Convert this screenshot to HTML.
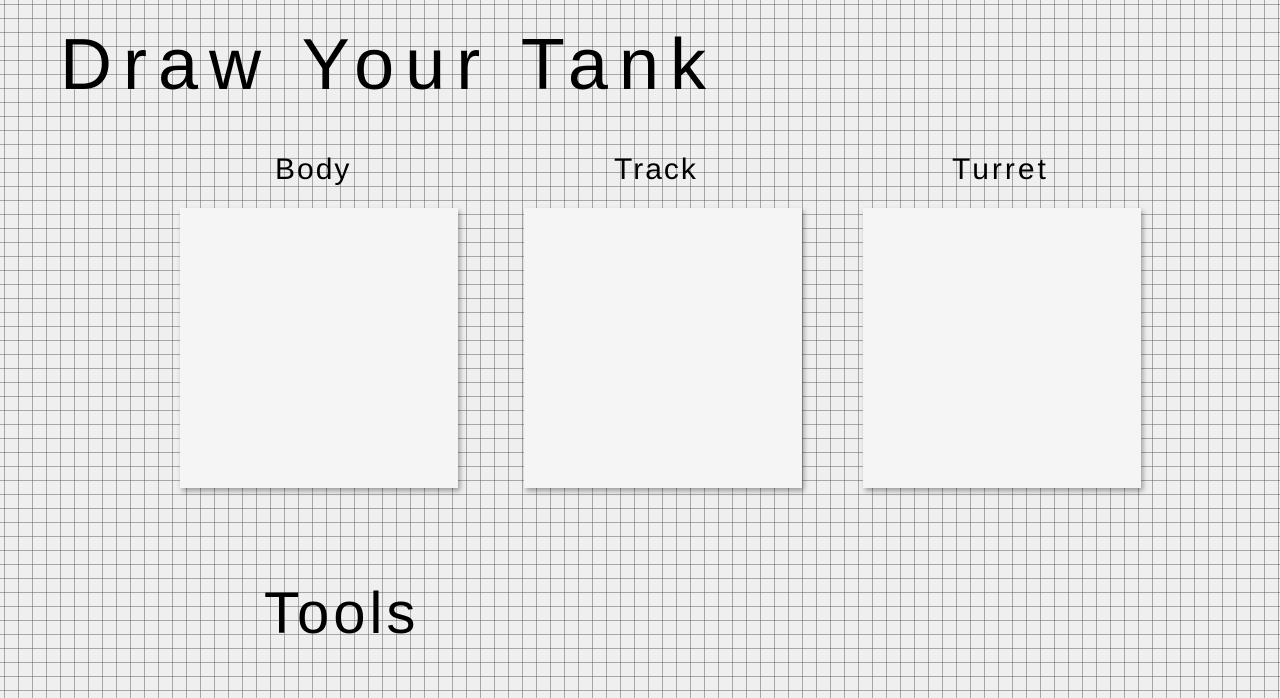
<!DOCTYPE html>
<html><head><style>
html,body{margin:0;width:1280px;height:698px;overflow:hidden}
body{background-color:#efefef;
background-image:linear-gradient(90deg,rgba(80,80,80,.45) 1px,transparent 1px),linear-gradient(rgba(80,80,80,.45) 1px,transparent 1px);
background-size:14px 14px;background-position:4px 4px;
font-family:"Liberation Sans",sans-serif;position:relative}
.t{position:absolute;color:#000;white-space:nowrap}
.p{position:absolute;top:208px;width:278px;height:280px;background:#f5f5f5;box-shadow:2px 3px 5px rgba(0,0,0,.35)}
</style></head><body>
<div class="t" style="left:60px;top:24px;font-size:72px;letter-spacing:11px">Draw Your Tank</div>
<div class="t" style="left:275px;top:153px;font-size:30px;letter-spacing:2px">Body</div>
<div class="t" style="left:614px;top:153px;font-size:30px;letter-spacing:2px">Track</div>
<div class="t" style="left:952px;top:153px;font-size:30px;letter-spacing:3px">Turret</div>
<div class="p" style="left:180px"></div>
<div class="p" style="left:524px"></div>
<div class="p" style="left:863px"></div>
<div class="t" style="left:264px;top:580px;font-size:58px;letter-spacing:4px">Tools</div>
</body></html>
